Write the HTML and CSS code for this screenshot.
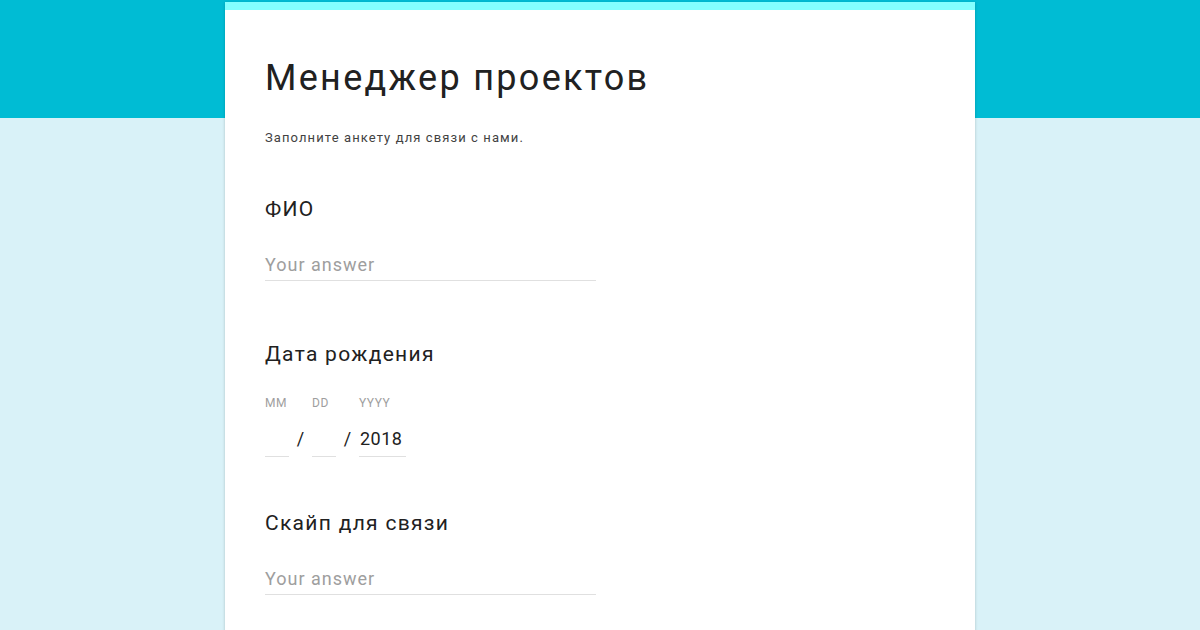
FILE: index.html
```html
<!DOCTYPE html>
<html>

<head>
    <meta charset="utf-8">
    <title>Менеджер проектов</title>
    <link rel="stylesheet" href="styles.css">
</head>

<body>
    <div class="band"></div>
    <div class="card">
        <h1 class="title">Менеджер проектов</h1>
        <p class="desc">Заполните анкету для связи с нами.</p>

        <div class="item">
            <div class="label">ФИО</div>
            <div class="answer">Your answer</div>
        </div>

        <div class="item">
            <div class="label">Дата рождения</div>
            <div class="date">
                <div class="part mm">
                    <span class="hint">MM</span>
                    <span class="field"></span>
                </div>
                <span class="slash">/</span>
                <div class="part dd">
                    <span class="hint">DD</span>
                    <span class="field"></span>
                </div>
                <span class="slash">/</span>
                <div class="part yy">
                    <span class="hint">YYYY</span>
                    <span class="field">2018</span>
                </div>
            </div>
        </div>

        <div class="item">
            <div class="label">Скайп для связи</div>
            <div class="answer">Your answer</div>
        </div>
    </div>
</body>

</html>
```

FILE: styles.css
```css
* {
    box-sizing: border-box;
}

html,
body {
    margin: 0;
    height: 100%;
}

body {
    background-color: #d9f2f8;
    font-family: Roboto, "Noto Sans", sans-serif;
    color: #202124;
    overflow: hidden;
}

.band {
    height: 118px;
    background-color: #00bcd4;
}

.card {
    position: absolute;
    top: 2px;
    left: 225px;
    width: 750px;
    height: 640px;
    background-color: #fff;
    border-top: 8px solid #84ffff;
    box-shadow: 0 1px 3px rgba(0, 0, 0, 0.2);
    padding: 0 40px;
}

.title {
    margin: 0;
    padding-top: 47px;
    font-size: 36px;
    font-weight: 400;
    line-height: 42px;
    letter-spacing: 2.3px;
    color: #212121;
}

.desc {
    margin: 0;
    padding-top: 31px;
    font-size: 13px;
    line-height: 16px;
    letter-spacing: 1.1px;
    color: #424242;
}

.item {
    padding-top: 51px;
}

.label {
    font-size: 21px;
    line-height: 24px;
    letter-spacing: 1.3px;
    color: #212121;
}

.answer {
    margin-top: 32px;
    width: 331px;
    font-size: 18px;
    line-height: 24px;
    letter-spacing: 1px;
    padding-bottom: 3px;
    color: #9e9e9e;
    border-bottom: 1px solid #e0e0e0;
}

.item + .item {
    padding-top: 61px;
}

.item + .item + .item {
    padding-top: 54px;
}

.date {
    display: flex;
    align-items: flex-end;
    margin-top: 30px;
}

.part {
    display: flex;
    flex-direction: column;
}

.hint {
    font-size: 12px;
    line-height: 14px;
    letter-spacing: 0.5px;
    color: #9e9e9e;
    margin-bottom: 17px;
}

.field {
    height: 30px;
    font-size: 18px;
    line-height: 24px;
    letter-spacing: 0.5px;
    color: #212121;
    border-bottom: 1px solid #e0e0e0;
    padding-left: 1px;
}

.mm,
.dd {
    width: 24px;
}

.yy {
    width: 47px;
}

.slash {
    width: 23px;
    text-align: center;
    font-size: 18px;
    line-height: 24px;
    padding-bottom: 6px;
    color: #212121;
}
```
